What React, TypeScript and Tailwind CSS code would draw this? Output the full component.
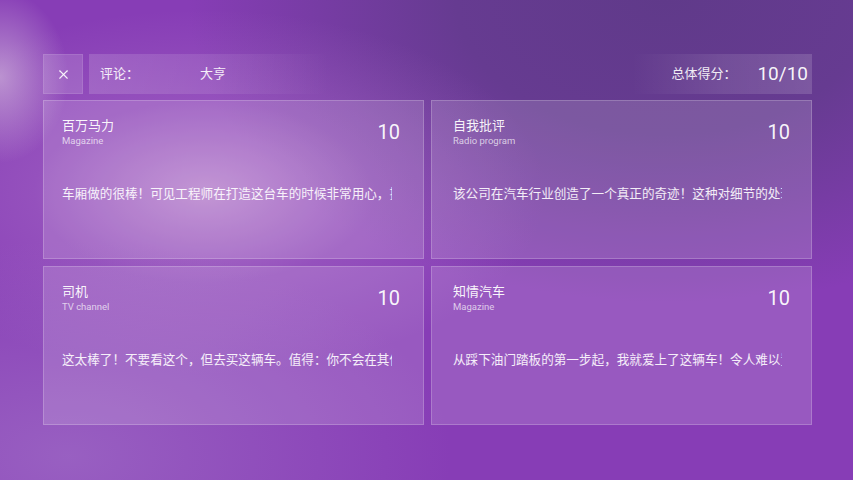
import { X } from "lucide-react";

const reviews = [
  {
    id: 1,
    title: "百万马力",
    source: "Magazine",
    score: 10,
    text: "车厢做的很棒！可见工程师在打造这台车的时候非常用心，操控感极佳，值得推荐。",
  },
  {
    id: 2,
    title: "自我批评",
    source: "Radio program",
    score: 10,
    text: "该公司在汽车行业创造了一个真正的奇迹！这种对细节的处理令人惊叹。",
  },
  {
    id: 3,
    title: "司机",
    source: "TV channel",
    score: 10,
    text: "这太棒了！不要看这个，但去买这辆车。值得：你不会在其他地方找到。",
  },
  {
    id: 4,
    title: "知情汽车",
    source: "Magazine",
    score: 10,
    text: "从踩下油门踏板的第一步起，我就爱上了这辆车！令人难以置信的体验。",
  },
];

export default function App() {
  return (
    <div className="relative w-[853px] h-[480px] overflow-hidden font-['Roboto','Noto_Sans_CJK_SC',sans-serif] text-white bg-[#873db6]">
      {/* background glow layers */}
      <div className="absolute inset-0 bg-[radial-gradient(ellipse_70%_80%_at_78%_0%,#603a8a_0%,#663b91_35%,rgba(135,61,182,0)_80%)]" />
      <div className="absolute inset-0 bg-[radial-gradient(ellipse_40%_38%_at_24%_40%,rgba(225,190,225,0.55)_0%,rgba(190,140,210,0.25)_50%,rgba(135,61,182,0)_100%)]" />
      <div className="absolute inset-0 bg-[radial-gradient(ellipse_8%_18%_at_0%_16%,rgba(220,200,225,0.6)_0%,rgba(135,61,182,0)_100%)]" />
      <div className="absolute inset-0 bg-[radial-gradient(ellipse_45%_45%_at_8%_95%,rgba(170,130,205,0.5)_0%,rgba(135,61,182,0)_100%)]" />

      <div className="relative ml-[43px] w-[769px] pt-[54px]">
        <div className="flex h-[40px] gap-[6px]">
          <div className="flex w-[40px] items-center justify-center bg-white/15 border border-white/10">
            <X size={15} strokeWidth={1.8} className="text-white/90" />
          </div>
          <div className="flex flex-1 items-center">
            <div className="flex h-full w-[240px] items-center bg-gradient-to-r from-white/15 via-white/10 to-white/0 pl-[11px] text-[13px] text-white/90">
              <span className="w-[100px]">评论：</span>
              <span>大亨</span>
            </div>
            <div className="flex-1" />
            <div className="flex h-full w-[180px] items-center justify-end gap-[21px] bg-gradient-to-r from-white/0 via-white/10 to-white/15 pr-[4px]">
              <span className="text-[13px] text-white/90">总体得分：</span>
              <span className="text-[19px] text-white/95">10/10</span>
            </div>
          </div>
        </div>

        <div className="mt-[6px] grid grid-cols-2 gap-[7px]">
          {reviews.map((r, i) => (
            <div
              key={r.id}
              className={
                i % 2 === 0
                  ? "h-[159px] border border-white/20 bg-white/15 pl-[18px] pr-[23px] pt-[16px]"
                  : "h-[159px] border border-white/20 bg-white/15 pl-[21px] pr-[21px] pt-[16px]"
              }
            >
              <div className="flex items-start justify-between">
                <div className="flex flex-col">
                  <span className="text-[13px] leading-[18px] text-white/95">{r.title}</span>
                  <span className="text-[9.5px] leading-[12px] text-white/70">{r.source}</span>
                </div>
                <span className="mt-[3px] text-[20px] leading-[24px] text-white/95">{r.score}</span>
              </div>
              <div className="mt-[38px] mr-[8px] overflow-hidden whitespace-nowrap text-[12.6px] leading-[18px] text-white/90">
                {r.text}
              </div>
            </div>
          ))}
        </div>
      </div>
    </div>
  );
}
